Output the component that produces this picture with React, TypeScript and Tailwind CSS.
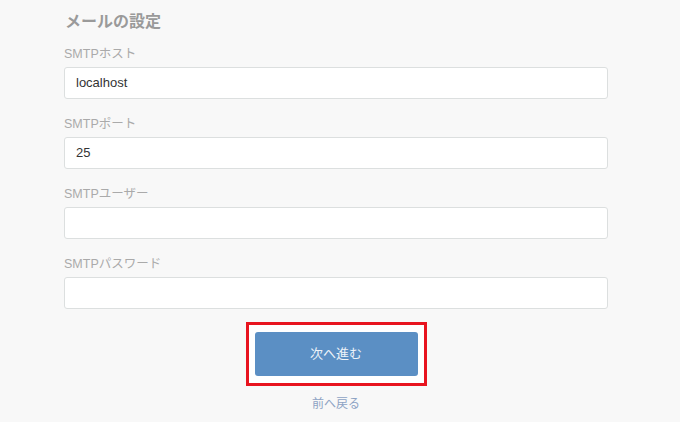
import React from "react";

const fields = [
  { label: "SMTPホスト", value: "localhost" },
  { label: "SMTPポート", value: "25" },
  { label: "SMTPユーザー", value: "" },
  { label: "SMTPパスワード", value: "" },
];

export default function App() {
  return (
    <div
      className="w-[680px] h-[422px] bg-[#f8f8f8] overflow-hidden"
      style={{ fontFamily: '"Liberation Sans", Arial, "Noto Sans CJK JP", sans-serif' }}
    >
      <div className="ml-[64px] w-[544px] pt-[10px]">
        <h2 className="text-[16px] leading-[24px] font-bold text-[#9a9a9a] pl-[1px] mb-[11px]">メールの設定</h2>
        {fields.map((f) => (
          <div key={f.label} className="mb-[16px]">
            <div className="text-[12.5px] leading-[18px] text-[#aaaaaa] mb-[4px]">{f.label}</div>
            <div className="h-[32px] bg-white border border-[#dcdfdf] rounded-[3px] px-[11px] flex items-center text-[13px] text-[#333333]">
              {f.value}
            </div>
          </div>
        ))}
        <div className="flex flex-col items-center -mt-[3px]">
          <div className="border-[3px] border-[#e8141f] bg-white px-[6px] py-[7px]">
            <button className="w-[163px] h-[44px] bg-[#5b8fc4] rounded-[3px] text-[13px] text-[#eef3f9] flex items-center justify-center">
              次へ進む
            </button>
          </div>
          <a className="mt-[9px] text-[12px] leading-[18px] text-[#8ea3c4]">前へ戻る</a>
        </div>
      </div>
    </div>
  );
}
